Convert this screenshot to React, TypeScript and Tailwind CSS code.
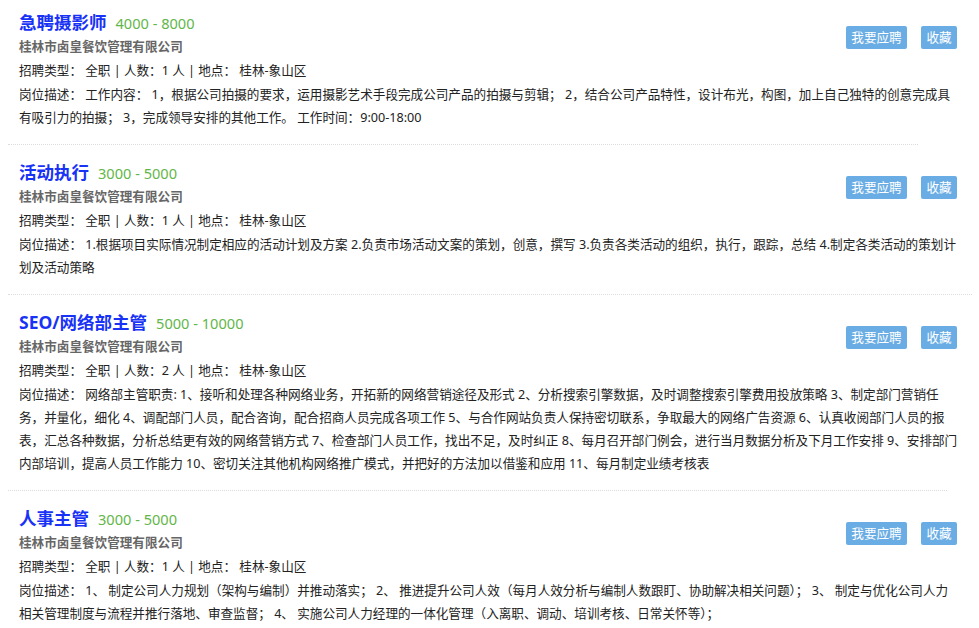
type Job = {
  title: string;
  salary: string;
  count: number;
  desc: string;
  sepWidth: string;
};

const jobs: Job[] = [
  {
    title: "急聘摄影师",
    salary: "4000 - 8000",
    count: 1,
    desc: "工作内容： 1，根据公司拍摄的要求，运用摄影艺术手段完成公司产品的拍摄与剪辑； 2，结合公司产品特性，设计布光，构图，加上自己独特的创意完成具有吸引力的拍摄； 3，完成领导安排的其他工作。 工作时间：9:00-18:00",
    sepWidth: "w-[910px]",
  },
  {
    title: "活动执行",
    salary: "3000 - 5000",
    count: 1,
    desc: "1.根据项目实际情况制定相应的活动计划及方案 2.负责市场活动文案的策划，创意，撰写 3.负责各类活动的组织，执行，跟踪，总结 4.制定各类活动的策划计划及活动策略",
    sepWidth: "w-[964px]",
  },
  {
    title: "SEO/网络部主管",
    salary: "5000 - 10000",
    count: 2,
    desc: "网络部主管职责: 1、接听和处理各种网络业务，开拓新的网络营销途径及形式 2、分析搜索引擎数据，及时调整搜索引擎费用投放策略 3、制定部门营销任务，并量化，细化 4、调配部门人员，配合咨询，配合招商人员完成各项工作 5、与合作网站负责人保持密切联系，争取最大的网络广告资源 6、认真收阅部门人员的报表，汇总各种数据，分析总结更有效的网络营销方式 7、检查部门人员工作，找出不足，及时纠正 8、每月召开部门例会，进行当月数据分析及下月工作安排 9、安排部门内部培训，提高人员工作能力 10、密切关注其他机构网络推广模式，并把好的方法加以借鉴和应用 11、每月制定业绩考核表",
    sepWidth: "w-[939px]",
  },
  {
    title: "人事主管",
    salary: "3000 - 5000",
    count: 1,
    desc: "1、 制定公司人力规划（架构与编制）并推动落实； 2、 推进提升公司人效（每月人效分析与编制人数跟盯、协助解决相关问题）； 3、 制定与优化公司人力相关管理制度与流程并推行落地、审查监督； 4、 实施公司人力经理的一体化管理（入离职、调动、培训考核、日常关怀等）；",
    sepWidth: "w-[939px]",
  },
];

function JobItem({ job, first }: { job: Job; first: boolean }) {
  return (
    <div>
      <div className={`ml-[19px] w-[942px] pb-[14.5px] ${first ? "pt-[9px]" : "pt-[14.5px]"}`}>
        <div className="flex items-start justify-between pr-[4px]">
          <div>
            <div className="h-[26px] leading-[26px] whitespace-nowrap">
              <span className="text-[17.5px] font-bold text-[#1832f6]">{job.title}</span>
              <span className="ml-[9px] text-[14.6px] text-[#62b64a]">{job.salary}</span>
            </div>
            <div className="h-[24px] leading-[24px] text-[12.6px] font-bold text-[#666]">
              桂林市卤皇餐饮管理有限公司
            </div>
          </div>
          <div className="mt-[16.5px] flex gap-[14px]">
            <button className="h-[23px] w-[61px] rounded-[2px] bg-[#6aade4] text-[12.6px] leading-[23px] text-white">
              我要应聘
            </button>
            <button className="h-[23px] w-[36px] rounded-[2px] bg-[#6aade4] text-[12.6px] leading-[23px] text-white">
              收藏
            </button>
          </div>
        </div>
        <div className="h-[24px] leading-[24px] text-[12.6px] text-[#222]">
          招聘类型： 全职 | 人数：{job.count} 人 | 地点： 桂林-象山区
        </div>
        <p className="w-[939px] text-[12.6px] leading-[23px] text-[#222]">
          岗位描述： {job.desc}
        </p>
      </div>
      <div className={`ml-[8px] border-b border-dotted border-[#dcdcdc] ${job.sepWidth}`} />
    </div>
  );
}

export default function App() {
  return (
    <div className="h-[628px] w-[979px] overflow-hidden bg-white font-['Noto_Sans','Noto_Sans_CJK_SC',sans-serif]">
      {jobs.map((job, i) => (
        <JobItem key={job.title} job={job} first={i === 0} />
      ))}
    </div>
  );
}
